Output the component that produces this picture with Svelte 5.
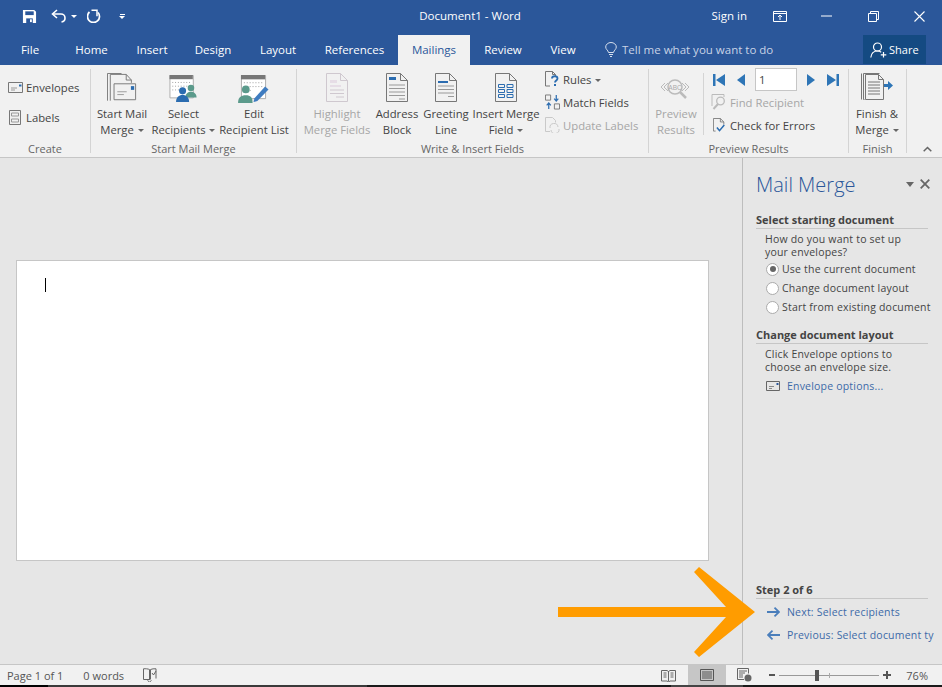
<script>
  const tabs = [
    { name: 'File', w: 60 },
    { name: 'Home', w: 63 },
    { name: 'Insert', w: 58 },
    { name: 'Design', w: 64 },
    { name: 'Layout', w: 66 },
    { name: 'References', w: 87 },
    { name: 'Mailings', w: 72, active: true },
    { name: 'Review', w: 66 },
    { name: 'View', w: 54 }
  ];
  const radios = [
    { label: 'Use the current document', on: true },
    { label: 'Change document layout' },
    { label: 'Start from existing document' }
  ];
</script>

<div class="app">
  <header class="titlebar">
    <div class="qat">
      <svg class="q-save" width="15" height="15" viewBox="0 0 16 16"><path d="M1 1h12l2 2v12H1z" fill="#fff"/><path d="M3.500 2.500h9v4h-9z" fill="#2b579a"/><path d="M4.500 10h7v5h-7z" fill="#2b579a"/><path d="M8.500 11h2v3h-2z" fill="#fff"/></svg>
      <svg class="q-undo" width="16" height="14" viewBox="0 0 16 14" fill="none" stroke="#fff" stroke-width="1.6"><path d="M6 1 1.500 5 6 9"/><path d="M2 5h8a4 4 0 0 1 4 4v0a4 4 0 0 1-3.500 4"/></svg>
      <i class="caret white"></i>
      <svg class="q-redo" width="14" height="14" viewBox="0 0 14 14" fill="none" stroke="#fff" stroke-width="1.700"><path d="M11 3.500A6 6 0 1 1 2.500 3"/><path d="M4.500 1.200h5.500v6" stroke-width="1.500"/></svg>
      <div class="q-more"><span></span><i class="caret white"></i></div>
    </div>
    <div class="doc-title">Document1 - Word</div>
    <div class="winctl">
      <span class="signin">Sign in</span>
      <svg class="w-ribbon" width="14" height="11" viewBox="0 0 14 11" fill="none" stroke="#fff"><path d="M.5 .5h13v10H.5zM.5 2.500h13"/><path d="M7 9V4.500M5 6l2-2 2 2"/></svg>
      <svg class="w-min" width="11" height="2" viewBox="0 0 11 2"><path d="M0 1h11" stroke="#fff"/></svg>
      <svg class="w-max" width="11" height="11" viewBox="0 0 11 11" fill="none" stroke="#fff"><path d="M.5 2.500h8v8h-8zM2.500 2.500v-2h8v8h-2"/></svg>
      <svg class="w-close" width="11" height="11" viewBox="0 0 11 11" stroke="#fff" stroke-width="1.100"><path d="M.5 .5l10 10M10.500 .5l-10 10"/></svg>
    </div>
  </header>

  <nav class="tabs">
    {#each tabs as t}
      <div class="tab" class:active={t.active} style="width:{t.w}px">{t.name}</div>
    {/each}
    <div class="tell">
      <svg width="12" height="15" viewBox="0 0 12 15" fill="none" stroke="#d5deec"><path d="M3.500 10.500C3 8 .7 7.500 .7 5a5.300 4.500 0 0 1 10.600 0c0 2.500-2.300 3-2.800 5.500zM4 12.500h4M5 14.500h2"/></svg>
      <span>Tell me what you want to do</span>
    </div>
    <div class="share">
      <svg width="18" height="16" viewBox="0 0 18 16" fill="none" stroke="#fff" stroke-width="1.200"><circle cx="7.500" cy="5" r="4"/><path d="M.8 15.500c.5-4 3-6.500 6.700-6.500 1.500 0 2.700.4 3.700 1.200"/><path d="M13.500 10v5.500M10.800 12.800h5.500"/></svg>
      <span>Share</span>
    </div>
  </nav>

  <section class="ribbon">
    <div class="group g-create">
      <div class="body col-small">
        <div class="small">
          <svg width="15" height="11" viewBox="0 0 15 11" fill="none" stroke="#777"><path d="M.5 .5h14v10H.5z"/><path d="M3 6h6M3 8h4" stroke="#999"/><path d="M11 2.500h2.500v2H11z" fill="#2b6cb0" stroke="none"/></svg>
          <span>Envelopes</span>
        </div>
        <div class="small">
          <svg class="ico-labels" width="12" height="15" viewBox="0 0 12 15" fill="none" stroke="#777"><path d="M.5 .5h11v14H.5z"/><path d="M2.500 3h7v3h-7zM2.500 9h7v3h-7z" stroke="#999"/></svg>
          <span>Labels</span>
        </div>
      </div>
      <div class="glabel">Create</div>
    </div>

    <div class="group g-start">
      <div class="body">
        <div class="big w-startmail">
          <svg width="30" height="30" viewBox="0 0 32 32" fill="none" stroke="#777"><path d="M.5 29.500V.5h15"/><path d="M3.500 29.500V1.500h17l5.500 6v3"/><path d="M20.500 1.500v6h5.500"/><path d="M7.500 11.500h23v17h-23z" fill="#f1f1f1"/><path d="M11 20h10M11 23h7" stroke="#999"/><rect x="25.500" y="14" width="3.500" height="4" fill="#2b6cb0" stroke="none"/></svg>
          <span>Start Mail</span><span>Merge <i class="caret"></i></span>
        </div>
        <div class="big w-select">
          <svg class="ico-cal" width="29" height="28" viewBox="0 0 30 30"><path d="M.5 .5h25v24H.5z" fill="#fff" stroke="#aaa"/><path d="M0 0h25v4.500H0z" fill="#777"/><path d="M3 8h20M3 12h20M3 16h9" stroke="#999" stroke-dasharray="1 2"/><circle cx="23" cy="14" r="3.500" fill="#5b9a8b"/><path d="M17 24c0-4 3-6 6-6s6 2 6 6z" fill="#5b9a8b"/><circle cx="14" cy="17" r="3.800" fill="#2b6cb0"/><path d="M7 29c0-5 3-7.500 7-7.500s7 2.500 7 7.500z" fill="#2b6cb0"/></svg>
          <span>Select</span><span>Recipients <i class="caret"></i></span>
        </div>
        <div class="big w-edit">
          <svg class="ico-cal" width="32" height="28" viewBox="0 0 33 29"><path d="M3.500 .5h25v24h-25z" fill="#fff" stroke="#aaa"/><path d="M3 0h25v4.500H3z" fill="#777"/><path d="M6 8h20M6 12h20M6 16h9" stroke="#999" stroke-dasharray="1 2"/><circle cx="8" cy="15" r="4" fill="#5b9a8b"/><path d="M0 29c0-6 3-8 8-8s7 2 7 8z" fill="#5b9a8b"/><path d="M17 24l11-12 3.500 3L20 27l-4 1z" fill="#3f7cc0"/></svg>
          <span>Edit</span><span>Recipient List</span>
        </div>
      </div>
      <div class="glabel">Start Mail Merge</div>
    </div>

    <div class="group g-write">
      <div class="body">
        <div class="big w-high disabled">
          <svg width="22" height="29" viewBox="0 0 22 29" fill="none" stroke="#cfc8cf"><path d="M.5 .5h14l7 7v21H.5z"/><path d="M14.500 .5v7h7"/><path d="M4 7h7v3H4zM4 12h11v2H4z" fill="#e6dde6" stroke="none"/><path d="M4 17h14M4 20.500h14M10 24h8"/></svg>
          <span>Highlight</span><span>Merge Fields</span>
        </div>
        <div class="big w-addr">
          <svg width="22" height="29" viewBox="0 0 22 29" fill="none" stroke="#777"><path d="M.5 .5h14l7 7v21H.5z"/><path d="M14.500 .5v7h7"/><path d="M3 4h7v3H3z" fill="#2b6cb0" stroke="none"/><path d="M3 12h16M3 15.500h16M3 19h16M3 22.500h16M13 26h6" stroke="#999"/></svg>
          <span>Address</span><span>Block</span>
        </div>
        <div class="big w-greet">
          <svg width="22" height="29" viewBox="0 0 22 29" fill="none" stroke="#777"><path d="M.5 .5h14l7 7v21H.5z"/><path d="M14.500 .5v7h7"/><path d="M3 8h10v2H3z" fill="#2b6cb0" stroke="none"/><path d="M3 13h16M3 16.500h16M3 20h16M13 23.500h6" stroke="#999"/></svg>
          <span>Greeting</span><span>Line</span>
        </div>
        <div class="big w-insert">
          <svg width="22" height="29" viewBox="0 0 22 29" fill="none" stroke="#777"><path d="M.5 .5h14l7 7v21H.5z"/><path d="M14.500 .5v7h7"/><path d="M3.500 11.500h6v3h-6zM12 11.500h6v3h-6zM3.500 16.500h6v3h-6zM12 16.500h6v3h-6zM3.500 21.500h6v3h-6zM12 21.500h6v3h-6z" stroke="#2b6cb0"/></svg>
          <span>Insert Merge</span><span>Field <i class="caret"></i></span>
        </div>
        <div class="col-rules">
          <div class="small">
            <svg width="15" height="16" viewBox="0 0 15 16" fill="none" stroke="#777"><path d="M5 15H.5V.5h7l3 3v2M7.500 .5v3h3"/><path d="M7 7.500c0-3 5.500-3 5.500 0 0 2-2.500 2-2.500 4" stroke="#2b6cb0" stroke-width="1.800"/><path d="M9 13h2v2H9z" fill="#2b6cb0" stroke="none"/></svg>
            <span>Rules <i class="caret"></i></span>
          </div>
          <div class="small">
            <svg width="15" height="16" viewBox="0 0 16 16" fill="none"><path d="M.5 .5h5.500v5.500H.5zM10 10h5.500v5.500H10z" stroke="#777"/><path d="M12 .5v6M9.800 4.500 12 7l2.200-2.500M4 15.500v-6M1.800 11.500 4 9l2.200 2.500" stroke="#2b6cb0" stroke-width="1.300"/></svg>
            <span>Match Fields</span>
          </div>
          <div class="small disabled">
            <svg width="15" height="16" viewBox="0 0 15 16" fill="none" stroke="#c9c9c9"><path d="M5 14.500H.5V.5h7l3 3v2"/><path d="M5 11a4 4 0 0 1 8-1M14 12a4 4 0 0 1-8 1"/></svg>
            <span>Update Labels</span>
          </div>
        </div>
      </div>
      <div class="glabel">Write &amp; Insert Fields</div>
    </div>

    <div class="group g-preview">
      <div class="body">
        <div class="big w-prev disabled">
          <svg class="ico-abc" width="32" height="21" viewBox="0 0 32 21" fill="none" stroke="#bbb"><circle cx="15" cy="8" r="7" stroke-width="1.500"/><path d="M20 13l6 6" stroke-width="2.500"/><path d="M5 4 1 8l4 4M8 4 4 8l4 4M22 4l4 4-4 4M25 4l4 4-4 4"/><text x="15" y="10.500" font-size="6.500" text-anchor="middle" fill="#aaa" stroke="none" font-family="Liberation Sans">ABC</text></svg>
          <span>Preview</span><span>Results</span>
        </div>
        <div class="vsep"></div>
        <div class="col-nav">
          <div class="navrow">
            <svg class="n-first" width="12" height="12" viewBox="0 0 12 12" fill="#2e75b6"><path d="M0 0h2.500v12H0zM12 0v12L3 6z"/></svg>
            <svg class="n-prev" width="8" height="12" viewBox="0 0 8 12" fill="#2e75b6"><path d="M8 0v12L0 6z"/></svg>
            <div class="recno">1</div>
            <svg class="n-next" width="8" height="12" viewBox="0 0 8 12" fill="#2e75b6"><path d="M0 0v12l8-6z"/></svg>
            <svg class="n-last" width="12" height="12" viewBox="0 0 12 12" fill="#2e75b6"><path d="M12 0H9.500v12H12zM0 0v12l9-6z"/></svg>
          </div>
          <div class="small disabled">
            <svg width="16" height="16" viewBox="0 0 16 16" fill="none" stroke="#bbb"><path d="M1 12V.5h12V3" /><circle cx="9.500" cy="7" r="3.800" stroke-width="1.300"/><path d="M7 10l-4.500 5" stroke-width="2"/></svg>
            <span>Find Recipient</span>
          </div>
          <div class="small">
            <svg class="ico-check" width="13" height="16" viewBox="0 0 15 16" fill="none" stroke="#777"><path d="M3 15H.5V.5h8l4 4v3M8.500 .5v4h4"/><path d="M4.500 11l3 3.500L13 8" stroke="#2b6cb0" stroke-width="1.800"/></svg>
            <span>Check for Errors</span>
          </div>
        </div>
      </div>
      <div class="glabel">Preview Results</div>
    </div>

    <div class="group g-finish">
      <div class="body">
        <div class="big w-finish">
          <svg width="32" height="27" viewBox="0 0 32 27" fill="none" stroke="#777"><path d="M.5 26.500V.5M3.500 26.500h-1V.5h16"/><path d="M4.500 26.500V1.500h13l5 5v20z" fill="#f1f1f1"/><path d="M17.500 1.500v5h5M7 9h12M7 12h12M7 15h12M7 18h12M7 21h12" /><path d="M23 11h4V8l5 4.500-5 4.500v-3h-4z" fill="#2e75b6" stroke="none"/></svg>
          <span>Finish &amp;</span><span>Merge <i class="caret"></i></span>
        </div>
      </div>
      <div class="glabel">Finish</div>
    </div>

    <svg class="collapse" width="9" height="6" viewBox="0 0 9 6" fill="none" stroke="#666" stroke-width="1.500"><path d="M.7 5.300 4.500 1.500l3.800 3.800"/></svg>
  </section>

  <main class="workspace">
    <div class="docarea">
      <div class="page"><div class="cursor"></div></div>
    </div>

    <aside class="pane">
      <div class="pane-head">
        <h1>Mail Merge</h1>
        <i class="pane-caret"></i>
        <svg width="10" height="10" viewBox="0 0 10 10" stroke="#666" stroke-width="1.800"><path d="M.7 .7l8.600 8.600M9.300 .7 .7 9.300"/></svg>
      </div>

      <h2>Select starting document</h2>
      <p>How do you want to set up<br />your envelopes?</p>
      <div class="radios">
        {#each radios as r}
          <div class="radio">
            <span class="dot" class:on={r.on}></span>
            <span>{r.label}</span>
          </div>
        {/each}
      </div>

      <h2 class="second">Change document layout</h2>
      <p>Click Envelope options to<br />choose an envelope size.</p>
      <div class="link env">
        <svg width="14" height="10" viewBox="0 0 14 10" fill="none" stroke="#666"><path d="M.5 .5h13v9H.5z"/><path d="M3 5.500h5M3 7.500h3" stroke="#888"/><path d="M10.500 2h2v2h-2z" fill="#2b579a" stroke="none"/></svg>
        <span>Envelope options...</span>
      </div>

      <div class="pane-foot">
        <h2>Step 2 of 6</h2>
        <div class="link step">
          <svg width="13" height="10" viewBox="0 0 13 10" fill="none" stroke="#4a7ebb" stroke-width="1.800"><path d="M0 5h12M7.500 .7 12 5 7.500 9.300"/></svg>
          <span>Next: Select recipients</span>
        </div>
        <div class="link step">
          <svg width="13" height="10" viewBox="0 0 13 10" fill="none" stroke="#4a7ebb" stroke-width="1.800"><path d="M13 5H1M5.500 .7 1 5l4.500 4.300"/></svg>
          <span>Previous: Select document ty</span>
        </div>
      </div>
    </aside>

    <svg class="callout" width="197" height="90" viewBox="558 567 197 90"><path d="M558 607H726L694 572l5-5 56 45-56 45-5-5 32-35H558z" fill="#ff9c00"/></svg>
  </main>

  <footer class="status">
    <span class="s-page">Page 1 of 1</span>
    <span class="s-words">0 words</span>
    <svg class="s-proof" width="14" height="14" viewBox="0 0 14 14" fill="none" stroke="#666"><path d="M6.500 12V1.500C5 .8 2.500 .6 .5 .8V11.500h6zM7.500 11.500V1.500C9 .8 11 .6 13 .8v9.700"/><path d="M9 5l1.500 2 2.500-4M4.500 12.500 6.500 14l2-1.500"/></svg>
    <div class="s-right">
      <svg class="v-read" width="15" height="13" viewBox="0 0 15 13" fill="none" stroke="#666"><path d="M7.500 2v10.500M.5 1.500h5.500l1.500 1 1.500-1h5.500v10.500H9l-1.500 1-1.500-1H.5z"/><path d="M2.500 4h3M2.500 6h3M2.500 8h3M9.500 4h3M9.500 6h3M9.500 8h3"/></svg>
      <div class="v-print">
        <svg width="14" height="12" viewBox="0 0 14 12" fill="none" stroke="#555"><path d="M.5 .5h13v11H.5zM2 3h10M2 5h10M2 7h10M2 9h10"/></svg>
      </div>
      <svg class="v-web" width="15" height="14" viewBox="0 0 15 14" fill="none" stroke="#666"><path d="M7 11.500H.5V.5h11v5M2 3h8M2 5h6M2 7h4M2 9h4"/><circle cx="11" cy="10" r="3.500" fill="#666" stroke="none"/></svg>
      <span class="z-minus"></span>
      <div class="slider"><span class="tick"></span><span class="thumb"></span></div>
      <span class="z-plus"></span>
      <span class="z-val">76%</span>
    </div>
  </footer>
  <div class="edge"></div>
</div>

<style>
  :global(body) {
    margin: 0;
    background: #e6e6e6;
  }

  .app {
    width: 942px;
    height: 687px;
    display: flex;
    flex-direction: column;
    overflow: hidden;
    font-family: "Open Sans", "Noto Sans", sans-serif;
    font-size: 11.300px;
    color: #444;
  }

  svg {
    display: block;
    flex: none;
  }

  .caret {
    display: inline-block;
    width: 0;
    height: 0;
    vertical-align: 2px;
    margin-left: 1px;
    border-left: 3px solid transparent;
    border-right: 3px solid transparent;
    border-top: 3px solid #666;
  }

  .caret.white {
    border-top-color: #fff;
  }

  .titlebar {
    height: 32px;
    flex: none;
    display: grid;
    grid-template-columns: 1fr auto 1fr;
    align-items: center;
    background: #2b579a;
    color: #fff;
  }

  .qat {
    display: flex;
    align-items: center;
    padding-left: 22px;
  }

  .q-undo {
    margin-left: 14px;
  }

  .qat > .caret {
    margin-left: 4px;
  }

  .q-redo {
    margin-left: 10px;
  }

  .q-more {
    display: flex;
    flex-direction: column;
    align-items: center;
    gap: 1px;
    margin-left: 18px;
  }

  .q-more span {
    width: 5px;
    height: 1px;
    background: #fff;
  }

  .q-more .caret {
    margin: 0;
  }

  .doc-title {
    font-size: 11.500px;
    white-space: nowrap;
    padding: 0 2px 2px 0;
  }

  .winctl {
    display: flex;
    align-items: center;
    justify-content: flex-end;
    padding-right: 17px;
  }

  .signin {
    font-size: 11.500px;
    padding-bottom: 2px;
  }

  .w-ribbon {
    margin-left: 26px;
  }

  .w-min {
    margin-left: 34px;
  }

  .w-max {
    margin-left: 36px;
  }

  .w-close {
    margin-left: 35px;
  }

  .tabs {
    height: 33px;
    flex: none;
    display: flex;
    background: #2b579a;
    color: #fff;
    font-size: 11.500px;
  }

  .tab {
    display: flex;
    align-items: center;
    justify-content: center;
    padding-top: 2px;
    box-sizing: border-box;
  }

  .tab.active {
    background: #f1f1f1;
    color: #2b579a;
    margin-top: 3px;
    padding-top: 0;
    padding-bottom: 1px;
  }

  .tell {
    display: flex;
    align-items: center;
    gap: 5px;
    margin-left: 15px;
    padding-top: 2px;
    color: #c8d3e6;
    white-space: nowrap;
  }

  .share {
    display: flex;
    align-items: center;
    gap: 1px;
    width: 63px;
    height: 29px;
    margin: 3px 16px 0 auto;
    padding-left: 7px;
    box-sizing: border-box;
    background: #144a82;
    font-size: 11px;
  }

  .ribbon {
    position: relative;
    height: 92px;
    flex: none;
    display: flex;
    background: #f1f1f1;
    border-bottom: 1px solid #c6c6c6;
  }

  .group {
    display: flex;
    flex-direction: column;
    box-sizing: border-box;
    margin-top: 4px;
    height: 84px;
    border-right: 1px solid #d4d4d4;
  }

  .body {
    flex: none;
    height: 72px;
    display: flex;
  }

  .glabel {
    height: 16px;
    line-height: 16px;
    text-align: center;
    font-size: 11px;
    color: #666;
    white-space: nowrap;
  }

  .g-create {
    width: 91px;
  }

  .g-start {
    width: 206px;
  }

  .g-write {
    width: 352px;
  }

  .g-preview {
    width: 200px;
  }

  .g-finish {
    width: 58px;
  }

  .col-small {
    flex-direction: column;
    padding: 8px 0 0 8px;
    gap: 10px;
    box-sizing: border-box;
  }

  .small {
    display: flex;
    align-items: center;
    gap: 3px;
    height: 20px;
    white-space: nowrap;
  }

  .ico-labels {
    margin: 0 2px 0 1px;
  }

  .big {
    display: flex;
    flex-direction: column;
    align-items: center;
    line-height: 16px;
    white-space: nowrap;
    box-sizing: border-box;
    height: 69px;
  }

  .big svg {
    margin-top: 4px;
  }

  .big svg.ico-cal {
    margin-top: 6px;
  }

  .big svg.ico-abc {
    margin-top: 10px;
  }

  .big svg + span {
    margin-top: auto;
  }

  .disabled {
    color: #a6a6a6;
  }

  .w-startmail {
    width: 52px;
    margin-left: 5px;
  }

  .w-select {
    width: 63px;
    margin-left: 4px;
  }

  .w-edit {
    width: 72px;
    margin-left: 3px;
  }

  .w-high {
    width: 70px;
    margin-left: 5px;
  }

  .w-addr {
    width: 44px;
    margin-left: 3px;
  }

  .w-greet {
    width: 46px;
    margin-left: 4px;
  }

  .w-insert {
    width: 68px;
    margin-left: 3px;
  }

  .col-rules {
    display: flex;
    flex-direction: column;
    gap: 3px;
    margin-left: 5px;
  }

  .w-prev {
    width: 50px;
    margin-left: 2px;
  }

  .vsep {
    width: 1px;
    height: 62px;
    margin: 4px 0 0 2px;
    background: #d4d4d4;
  }

  .col-nav {
    display: flex;
    flex-direction: column;
    gap: 3px;
    margin-top: -1px;
    padding-left: 7px;
  }

  .navrow {
    display: flex;
    align-items: center;
    height: 23px;
    margin-bottom: -2px;
    padding-left: 2px;
  }

  .n-prev {
    margin-left: 12px;
  }

  .recno {
    width: 42px;
    height: 23px;
    margin-left: 10px;
    padding-left: 3px;
    box-sizing: border-box;
    background: #fff;
    border: 1px solid #c6c6c6;
    line-height: 21px;
  }

  .n-next {
    margin-left: 10px;
  }

  .n-last {
    margin-left: 12px;
  }

  .ico-check {
    margin-left: 2px;
    margin-right: 1px;
  }

  .w-finish {
    width: 56px;
  }

  .collapse {
    position: absolute;
    right: 10px;
    bottom: 5px;
  }

  .workspace {
    position: relative;
    flex: 1;
    min-height: 0;
    display: flex;
    background: #e6e6e6;
  }

  .docarea {
    flex: 1;
    padding: 102px 0 0 16px;
  }

  .page {
    width: 663px;
    height: 282px;
    padding: 17px 0 0 28px;
    background: #fff;
    border: 1px solid #c6c6c6;
  }

  .cursor {
    width: 1px;
    height: 14px;
    background: #000;
  }

  .pane {
    width: 200px;
    flex: none;
    display: flex;
    flex-direction: column;
    box-sizing: border-box;
    padding: 0 0 18px 13px;
    border-left: 1px solid #bdbdbd;
    overflow: hidden;
    font-size: 10.500px;
    color: #444;
    letter-spacing: 0.2px;
  }

  .pane-head {
    display: flex;
    align-items: center;
    box-sizing: border-box;
    height: 55px;
    padding: 0 12px 3px 0;
  }

  h1 {
    flex: 1;
    margin: 0;
    font-size: 20px;
    font-weight: 300;
    letter-spacing: 0;
    color: #2b579a;
  }

  .pane-caret {
    width: 0;
    height: 0;
    margin-right: 6px;
    border-left: 4px solid transparent;
    border-right: 4px solid transparent;
    border-top: 5px solid #666;
  }

  h2 {
    margin: 0;
    height: 15px;
    width: 172px;
    line-height: 14px;
    font-size: 11px;
    font-weight: 700;
    letter-spacing: 0;
    color: #444;
    border-bottom: 1px solid #c6c6c6;
    white-space: nowrap;
  }

  h2.second {
    margin-top: 13px;
  }

  p {
    margin: 4px 0 0 9px;
    line-height: 13px;
  }

  .radios {
    display: flex;
    flex-direction: column;
    gap: 3px;
    margin: 2px 0 0 10px;
  }

  .radio {
    display: flex;
    align-items: center;
    gap: 3px;
    height: 16px;
    white-space: nowrap;
  }

  .dot {
    position: relative;
    width: 11px;
    height: 11px;
    border: 1px solid #ababab;
    border-radius: 50%;
    background: #fff;
  }

  .dot.on::after {
    content: "";
    position: absolute;
    inset: 2.500px;
    border-radius: 50%;
    background: #666;
  }

  .link {
    display: flex;
    align-items: center;
    white-space: nowrap;
    color: #3d6aa8;
  }

  .env {
    gap: 7px;
    margin: 5px 0 0 10px;
  }

  .pane-foot {
    margin-top: auto;
  }

  .step {
    gap: 7px;
    height: 23px;
    padding-left: 11px;
  }

  .pane-foot h2 {
    margin-bottom: 1px;
  }

  .callout {
    position: absolute;
    left: 558px;
    top: 409px;
  }

  .status {
    height: 20px;
    flex: none;
    display: flex;
    align-items: center;
    background: #f1f1f1;
    border-top: 1px solid #c6c6c6;
    font-size: 11px;
    color: #555;
  }

  .edge {
    height: 2px;
    flex: none;
    background: linear-gradient(to right, #000 48px, #3a3a3a 48px, #3a3a3a 367px, #1a1a1a 367px, #1a1a1a 671px, #444 671px, #444 743px, #1a1a1a 743px);
  }

  .s-page {
    margin-left: 7px;
  }

  .s-words {
    margin-left: 20px;
  }

  .s-proof {
    margin-left: 19px;
  }

  .s-right {
    margin-left: auto;
    display: flex;
    align-items: center;
    height: 100%;
    padding-right: 14px;
  }

  .v-print {
    display: flex;
    align-items: center;
    justify-content: center;
    width: 38px;
    height: 100%;
    margin-left: 12px;
    background: #c6c6c6;
  }

  .v-web {
    margin-left: 11px;
  }

  .z-minus {
    width: 6px;
    height: 2px;
    margin-left: 17px;
    background: #555;
  }

  .slider {
    position: relative;
    width: 100px;
    height: 1px;
    margin-left: 4px;
    background: #999;
  }

  .thumb {
    position: absolute;
    left: 36px;
    top: -5px;
    width: 4px;
    height: 11px;
    background: #555;
  }

  .tick {
    position: absolute;
    left: 50px;
    top: -2px;
    width: 1px;
    height: 5px;
    background: #aaa;
  }

  .z-plus {
    position: relative;
    width: 8px;
    height: 2px;
    margin-left: 4px;
    background: #555;
  }

  .z-plus::after {
    content: "";
    position: absolute;
    left: 3px;
    top: -3px;
    width: 2px;
    height: 8px;
    background: #555;
  }

  .z-val {
    margin-left: 15px;
  }
</style>
